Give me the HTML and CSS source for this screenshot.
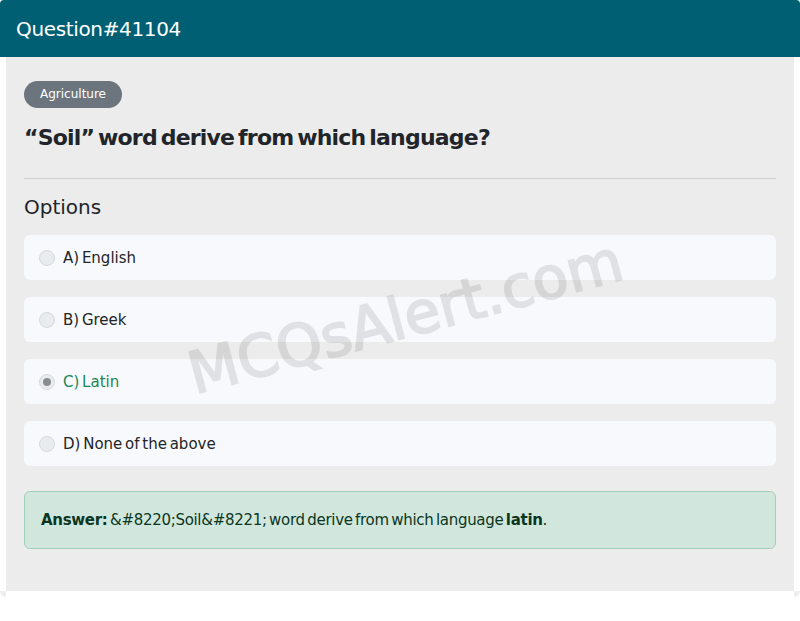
FILE: index.html
```html
<!DOCTYPE html>
<html lang="en">
<head>
  <meta charset="UTF-8">
  <meta name="viewport" content="width=device-width, initial-scale=1.0">
  <title>Question#41104 | MCQsAlert</title>
  <link rel="stylesheet" href="styles.css">
</head>
<body>
  <div class="card">
    <div class="card-header">
      <h1>Question#41104</h1>
    </div>
    <div class="card-body">
      <span class="badge">Agriculture</span>
      <h2 class="question">“Soil” word derive from which language?</h2>
      <hr>
      <h3 class="options-title">Options</h3>
      <ul class="options">
        <li class="option"><span class="radio"></span>A) English</li>
        <li class="option"><span class="radio"></span>B) Greek</li>
        <li class="option correct"><span class="radio checked"></span>C) Latin</li>
        <li class="option"><span class="radio"></span>D) None of the above</li>
      </ul>
      <div class="answer">
        <p><strong>Answer:</strong> &amp;#8220;Soil&amp;#8221; word derive from which language <strong>latin</strong>.</p>
      </div>
      <div class="watermark">MCQsAlert.com</div>
    </div>
    <div class="card-foot"></div>
  </div>
</body>
</html>
```

FILE: styles.css
```css
:root{
  --teal-color:#015f74;
  --body-color:#ececec;
  --option-color:#f8f9fc;
  --text-color:#212529;
  --badge-color:#6c757d;
  --success-bg:#d1e7dd;
  --success-border:#a3cfbb;
  --success-text:#0a3622;
  --green-color:#198754;
}
*{
  padding:0;
  margin:0;
  box-sizing: border-box;
}
body{
  font-family: "DejaVu Sans", sans-serif;
  color: var(--text-color);
  background-color: #fff;
}
.card{
  width: 800px;
}
.card-header{
  background-color: var(--teal-color);
  height: 57px;
  padding: 0 16px;
  display: flex;
  align-items: center;
  border-radius: 4px 4px 0 0;
}
.card-header h1{
  color: #fff;
  font-size: 20px;
  font-weight: 400;
  letter-spacing: -0.35px;
}
.card-body{
  background-color: var(--body-color);
  margin: 0 6px;
  padding: 24px 18px 42px;
  position: relative;
  overflow: hidden;
}
.badge{
  display: inline-block;
  background-color: var(--badge-color);
  color: #fff;
  font-size: 12px;
  line-height: 27px;
  padding: 0 16px;
  border-radius: 14px;
}
.question{
  font-size: 22px;
  font-weight: 700;
  margin-top: 15px;
  letter-spacing: -0.8px;
  word-spacing: -3px;
  line-height: 30px;
}
hr{
  border: none;
  border-top: 1px solid #cfcfcf;
  margin: 25px 0 16px;
}
.options-title{
  font-size: 20px;
  font-weight: 400;
  line-height: 24px;
  margin-bottom: 16px;
}
.options{
  list-style: none;
  display: flex;
  flex-direction: column;
  gap: 17px;
}
.option{
  background-color: var(--option-color);
  border-radius: 6px;
  height: 45px;
  padding: 0 15px;
  display: flex;
  align-items: center;
  gap: 8px;
  font-size: 15px;
  word-spacing: -2px;
}
.option.correct{
  color: var(--green-color);
}
.radio{
  width: 16px;
  height: 16px;
  border-radius: 50%;
  background-color: #e9ecef;
  border: 1px solid #d5d8dc;
  display: flex;
  justify-content: center;
  align-items: center;
}
.radio.checked::after{
  content: "";
  width: 8px;
  height: 8px;
  border-radius: 50%;
  background-color: #8a8d90;
}
.answer{
  margin-top: 25px;
  background-color: var(--success-bg);
  border: 1px solid var(--success-border);
  border-radius: 6px;
  color: var(--success-text);
  padding: 19px 16px;
  font-size: 15px;
  line-height: 18px;
  letter-spacing: -0.3px;
  word-spacing: -2px;
}
.watermark{
  position: absolute;
  left: 176px;
  top: 226px;
  font-size: 58px;
  font-weight: 400;
  color: #000;
  -webkit-text-stroke: 2px #000;
  opacity: 0.09;
  transform: rotate(-15deg);
  white-space: nowrap;
  pointer-events: none;
}
.card-foot{
  height: 6px;
  border-radius: 0 0 6px 6px;
  background: linear-gradient(to right, #eee 6px, #fff 6px, #fff 794px, #eee 794px);
}
```
